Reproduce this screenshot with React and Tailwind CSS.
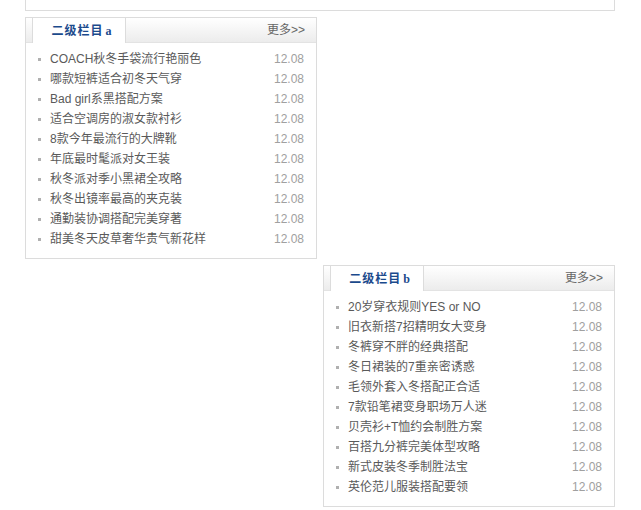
import React from "react";

const listA = [
  "COACH秋冬手袋流行艳丽色",
  "哪款短裤适合初冬天气穿",
  "Bad girl系黑搭配方案",
  "适合空调房的淑女款衬衫",
  "8款今年最流行的大牌靴",
  "年底最时髦派对女王装",
  "秋冬派对季小黑裙全攻略",
  "秋冬出镜率最高的夹克装",
  "通勤装协调搭配完美穿著",
  "甜美冬天皮草奢华贵气新花样",
];

const listB = [
  "20岁穿衣规则YES or NO",
  "旧衣新搭7招精明女大变身",
  "冬裤穿不胖的经典搭配",
  "冬日裙装的7重亲密诱惑",
  "毛领外套入冬搭配正合适",
  "7款铅笔裙变身职场万人迷",
  "贝壳衫+T恤约会制胜方案",
  "百搭九分裤完美体型攻略",
  "新式皮装冬季制胜法宝",
  "英伦范儿服装搭配要领",
];

function Box({ title, letter, items }) {
  return (
    <div className="w-[292px] border border-[#dcdcdc] bg-white">
      <div className="flex h-[25px] items-stretch border-b border-[#e3e3e3] bg-gradient-to-b from-white to-[#ececec]">
        <div className="w-[6px]" />
        <div className="-mb-px flex w-[94px] items-center justify-center border-x border-[#dcdcdc] bg-white pl-[6px]">
          <span className="text-[12px] font-bold tracking-[1px] text-[#1b4a8c]">
            {title}
            <span className="ml-[2px] font-['Liberation_Serif',serif] text-[12px]">{letter}</span>
          </span>
        </div>
        <div className="flex flex-1 items-center justify-end pr-[11px] text-[12px] text-[#666]">
          更多&gt;&gt;
        </div>
      </div>
      <ul className="pt-[6px] pb-[9px] pl-[12px] pr-[12px]">
        {items.map((t) => (
          <li key={t} className="flex h-[20px] items-center">
            <span className="mr-[9px] h-[3px] w-[3px] bg-[#b0b0b0]" />
            <span className="flex-1 text-[12px] text-[#5a5a5a]">{t}</span>
            <span className="text-[12px] text-[#a0a0a0]">12.08</span>
          </li>
        ))}
      </ul>
    </div>
  );
}

export default function App() {
  return (
    <div className="h-[510px] w-[641px] bg-white font-['Liberation_Sans','Noto_Sans_CJK_SC',sans-serif]">
      <div className="ml-[25px] w-[590px]">
        <div className="h-[11px] border-x border-b border-[#dcdcdc]" />
        <div className="mt-[6px]">
          <Box title="二级栏目" letter="a" items={listA} />
        </div>
        <div className="mt-[6px] flex justify-end">
          <Box title="二级栏目" letter="b" items={listB} />
        </div>
      </div>
    </div>
  );
}
